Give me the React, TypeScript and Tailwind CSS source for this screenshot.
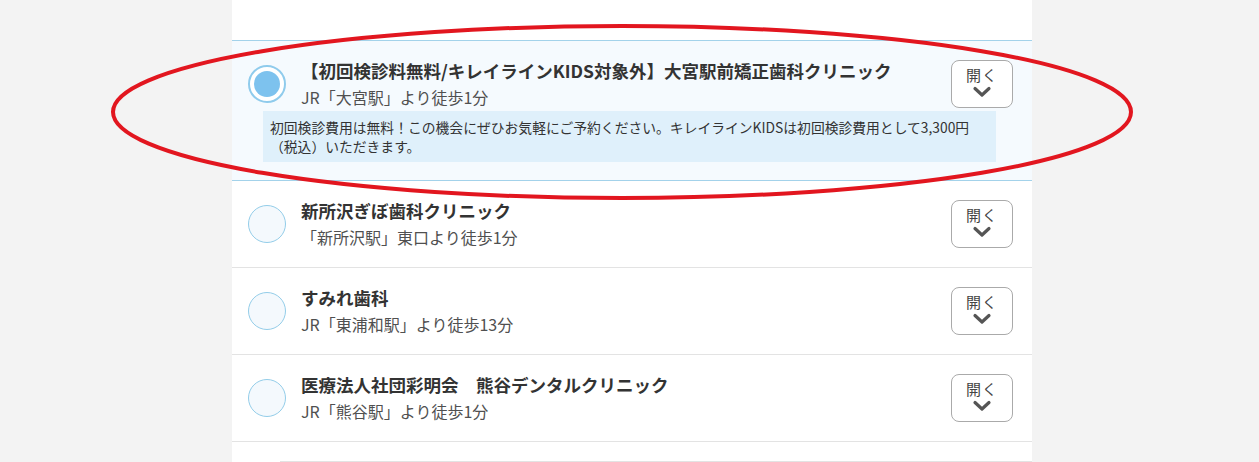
import { useState } from "react";

type Clinic = {
  id: string;
  name: string;
  access: string;
  note?: string;
};

const CLINICS: Clinic[] = [
  {
    id: "omiya",
    name: "【初回検診料無料/キレイラインKIDS対象外】大宮駅前矯正歯科クリニック",
    access: "JR「大宮駅」より徒歩1分",
    note: "初回検診費用は無料！この機会にぜひお気軽にご予約ください。キレイラインKIDSは初回検診費用として3,300円（税込）いただきます。",
  },
  { id: "shintokorozawa", name: "新所沢ぎぼ歯科クリニック", access: "「新所沢駅」東口より徒歩1分" },
  { id: "sumire", name: "すみれ歯科", access: "JR「東浦和駅」より徒歩13分" },
  { id: "kumagaya", name: "医療法人社団彩明会　熊谷デンタルクリニック", access: "JR「熊谷駅」より徒歩1分" },
];

function Radio({ checked }: { checked: boolean }) {
  if (checked) {
    return (
      <span className="flex h-[38px] w-[38px] shrink-0 items-center justify-center rounded-full border-[2.5px] border-[#8fcbec] bg-white">
        <span className="h-[26px] w-[26px] rounded-full bg-[#7dc2ee]" />
      </span>
    );
  }
  return <span className="h-[38px] w-[38px] shrink-0 rounded-full border border-[#93cde9] bg-[#f4f9fd]" />;
}

function OpenButton() {
  return (
    <button
      type="button"
      className="flex h-[48px] w-[62px] shrink-0 flex-col items-center justify-start rounded-[8px] border border-[#aaaaaa] bg-white pt-[5px] text-[15px] leading-[18px] tracking-[1px] text-[#444]"
    >
      <span>開く</span>
      <svg width="20" height="12" viewBox="0 0 20 12" className="mt-[2px]">
        <path d="M3 2.5 L10 9 L17 2.5" fill="none" stroke="#555" strokeWidth="3.2" strokeLinecap="round" strokeLinejoin="round" />
      </svg>
    </button>
  );
}

export default function App() {
  const [selected, setSelected] = useState("omiya");

  return (
    <div
      className="relative h-[462px] w-full overflow-hidden bg-[#f3f3f3]"
      style={{ fontFamily: '"Noto Sans CJK JP", "Noto Sans", sans-serif' }}
    >
      <div className="ml-[232px] w-[800px] bg-white pt-[40px]">
        <ul>
          {CLINICS.map((c) => {
            const on = c.id === selected;
            return (
              <li
                key={c.id}
                onClick={() => setSelected(c.id)}
                className={
                  on
                    ? "border-y border-[#a3d2ea] bg-[#f5fafe] pb-[18px] pt-[17px]"
                    : "border-b border-[#e3e3e3] pb-[17px] pt-[17px]"
                }
              >
                <div className="flex items-center pl-[16px] pr-[19px]">
                  <Radio checked={on} />
                  <div className="ml-[15px] flex-1">
                    <p className="text-[17.5px] font-bold leading-[26px] text-[#333]">{c.name}</p>
                    <p className="text-[16px] leading-[26px] text-[#505050]">{c.access}</p>
                  </div>
                  <OpenButton />
                </div>
                {c.note && (
                  <p className="ml-[31px] mr-[36px] mt-[1px] bg-[#dff0fb] px-[7px] pb-[6px] pt-[7px] text-[13.8px] leading-[19px] text-[#333]">
                    {c.note}
                  </p>
                )}
              </li>
            );
          })}
        </ul>
        <div className="ml-[48px] mt-[19px] h-[40px] border-t border-[#e3e3e3]" />
      </div>

      {/* 赤丸の注釈 */}
      <svg className="pointer-events-none absolute left-0 top-0" width="1259" height="462" viewBox="0 0 1259 462">
        <ellipse cx="622" cy="112" rx="509" ry="86" fill="none" stroke="#e2161f" strokeWidth="4" />
      </svg>
    </div>
  );
}
